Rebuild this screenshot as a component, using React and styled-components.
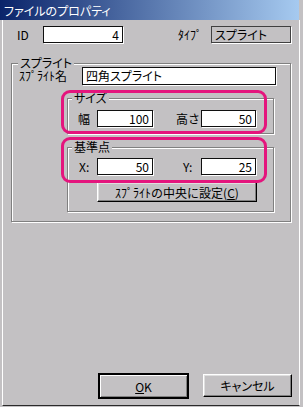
import React from "react";
import styled, { createGlobalStyle } from "styled-components";

const Global = createGlobalStyle`
  html, body { margin: 0; padding: 0; background: #c0c0c0; }
  * { box-sizing: border-box; }
`;

const FONT = `"MS UI Gothic", "Noto Sans CJK JP", "Noto Sans", sans-serif`;

const Window = styled.div`
  width: 303px;
  height: 407px;
  background: #c3c1c3;
  display: flex;
  flex-direction: column;
  font-family: ${FONT};
  font-size: 12px;
  color: #000;
`;

const TitleBar = styled.div`
  height: 20px;
  margin-right: 4px;
  padding-left: 4px;
  display: flex;
  align-items: center;
  color: #fff;
  background: linear-gradient(to right, #0a246a, #a6caf0);
  font-feature-settings: "palt";
`;

const Body = styled.div`
  flex: 1;
  margin: 0 3px 1px 2px;
  border-left: 1px solid #fff;
  border-right: 1px solid #fff;
  border-bottom: 1px solid #2a2a2a;
  display: flex;
  flex-direction: column;
`;

const Row = styled.div`
  display: flex;
  align-items: center;
  margin-top: ${(p) => p.$top || 0}px;
  padding-left: ${(p) => p.$left || 0}px;
`;

const Label = styled.span`
  width: ${(p) => p.$w}px;
  margin-left: ${(p) => p.$ml || 0}px;
  flex: none;
  white-space: nowrap;
  line-height: 12px;
`;

const Field = styled.div`
  width: ${(p) => p.$w}px;
  height: ${(p) => p.$h || 17}px;
  flex: none;
  display: flex;
  align-items: center;
  justify-content: ${(p) => (p.$right ? "flex-end" : "flex-start")};
  padding: 0 3px;
  background: #fff;
  border: 1px solid #101010;
  box-shadow: 1px 1px 0 #fff;
  white-space: nowrap;
  line-height: 12px;
  font-feature-settings: "palt";
`;

const Static = styled(Field)`
  background: transparent;
  border-color: #404040;
`;

const Group = styled.div`
  position: relative;
  display: flex;
  flex-direction: column;
  margin-top: ${(p) => p.$top}px;
  margin-left: ${(p) => p.$left}px;
  width: ${(p) => p.$w}px;
  height: ${(p) => p.$h}px;
  border: 1px solid #808080;
  box-shadow: inset 1px 1px 0 #fff, 1px 1px 0 #fff;
`;

const GroupTitle = styled.span`
  align-self: flex-start;
  margin: -8px 0 -5px ${(p) => p.$left}px;
  padding: 0 2px;
  height: 13px;
  line-height: 13px;
  background: #c3c1c3;
  white-space: nowrap;
  font-feature-settings: "palt";
`;

const Highlight = styled.div`
  position: absolute;
  left: ${(p) => p.$x}px;
  top: ${(p) => p.$y}px;
  width: ${(p) => p.$w}px;
  height: ${(p) => p.$h}px;
  border: 3px solid #e4157d;
  border-radius: 9px;
  pointer-events: none;
`;

const Button = styled.div`
  width: ${(p) => p.$w}px;
  height: ${(p) => p.$h}px;
  margin-left: ${(p) => p.$ml || 0}px;
  flex: none;
  display: flex;
  align-items: center;
  justify-content: center;
  border: 1px solid;
  border-color: #fff #000 #000 #fff;
  box-shadow: inset -1px -1px 0 #808080, inset 1px 1px 0 #dfdfdf;
  white-space: nowrap;
  font-feature-settings: ${(p) => (p.$palt ? `"palt"` : "normal")};
  ${(p) =>
    p.$default &&
    `
    outline: 1px solid #000;
    border: 1px solid #000;
    box-shadow: inset 1px 1px 0 #fff, inset -1px -1px 0 #808080;
  `}
`;

const Mnemonic = styled.u`
  text-decoration: underline;
`;

const ButtonRow = styled.div`
  display: flex;
  align-items: flex-start;
  margin-top: auto;
  margin-bottom: 7px;
  padding-left: 96px;
`;

export default function App() {
  return (
    <>
      <Global />
      <Window>
        <TitleBar>ファイルのプロパティ</TitleBar>
        <Body>
          <Row $top={6} $left={14}>
            <Label $w={26}>ID</Label>
            <Field $w={80} $right>4</Field>
            <Label $w={33} $ml={55}>ﾀｲﾌﾟ</Label>
            <Static $w={80}>スプライト</Static>
          </Row>

          <Group $top={20} $left={8} $w={280} $h={159}>
            <GroupTitle $left={6}>スプライト</GroupTitle>
            <Row $top={3} $left={7}>
              <Label $w={63}>ｽﾌﾟﾗｲﾄ名</Label>
              <Field $w={194} $h={18}>四角スプライト</Field>
            </Row>

            <Group $top={13} $left={55} $w={207} $h={36}>
              <GroupTitle $left={4}>サイズ</GroupTitle>
              <Row $top={11} $left={10}>
                <Label $w={19}>幅</Label>
                <Field $w={56} $right>100</Field>
                <Label $w={25} $ml={23}>高さ</Label>
                <Field $w={55} $right>50</Field>
              </Row>
              <Highlight $x={-7} $y={-9} $w={206} $h={44} />
            </Group>

            <Group $top={13} $left={55} $w={207} $h={65}>
              <GroupTitle $left={4}>基準点</GroupTitle>
              <Row $top={10} $left={11}>
                <Label $w={18}>X:</Label>
                <Field $w={56} $right>50</Field>
                <Label $w={18} $ml={30}>Y:</Label>
                <Field $w={55} $right>25</Field>
              </Row>
              <Row $top={7} $left={29}>
                <Button $w={160} $h={20}>
                  ｽﾌﾟﾗｲﾄの中央に設定(<Mnemonic>C</Mnemonic>)
                </Button>
              </Row>
              <Highlight $x={-7} $y={-11} $w={206} $h={46} />
            </Group>
          </Group>

          <ButtonRow>
            <Button $w={89} $h={24} $default>
              <Mnemonic>O</Mnemonic>K
            </Button>
            <Button $w={89} $h={23} $ml={15} $palt>キャンセル</Button>
          </ButtonRow>
        </Body>
      </Window>
    </>
  );
}
